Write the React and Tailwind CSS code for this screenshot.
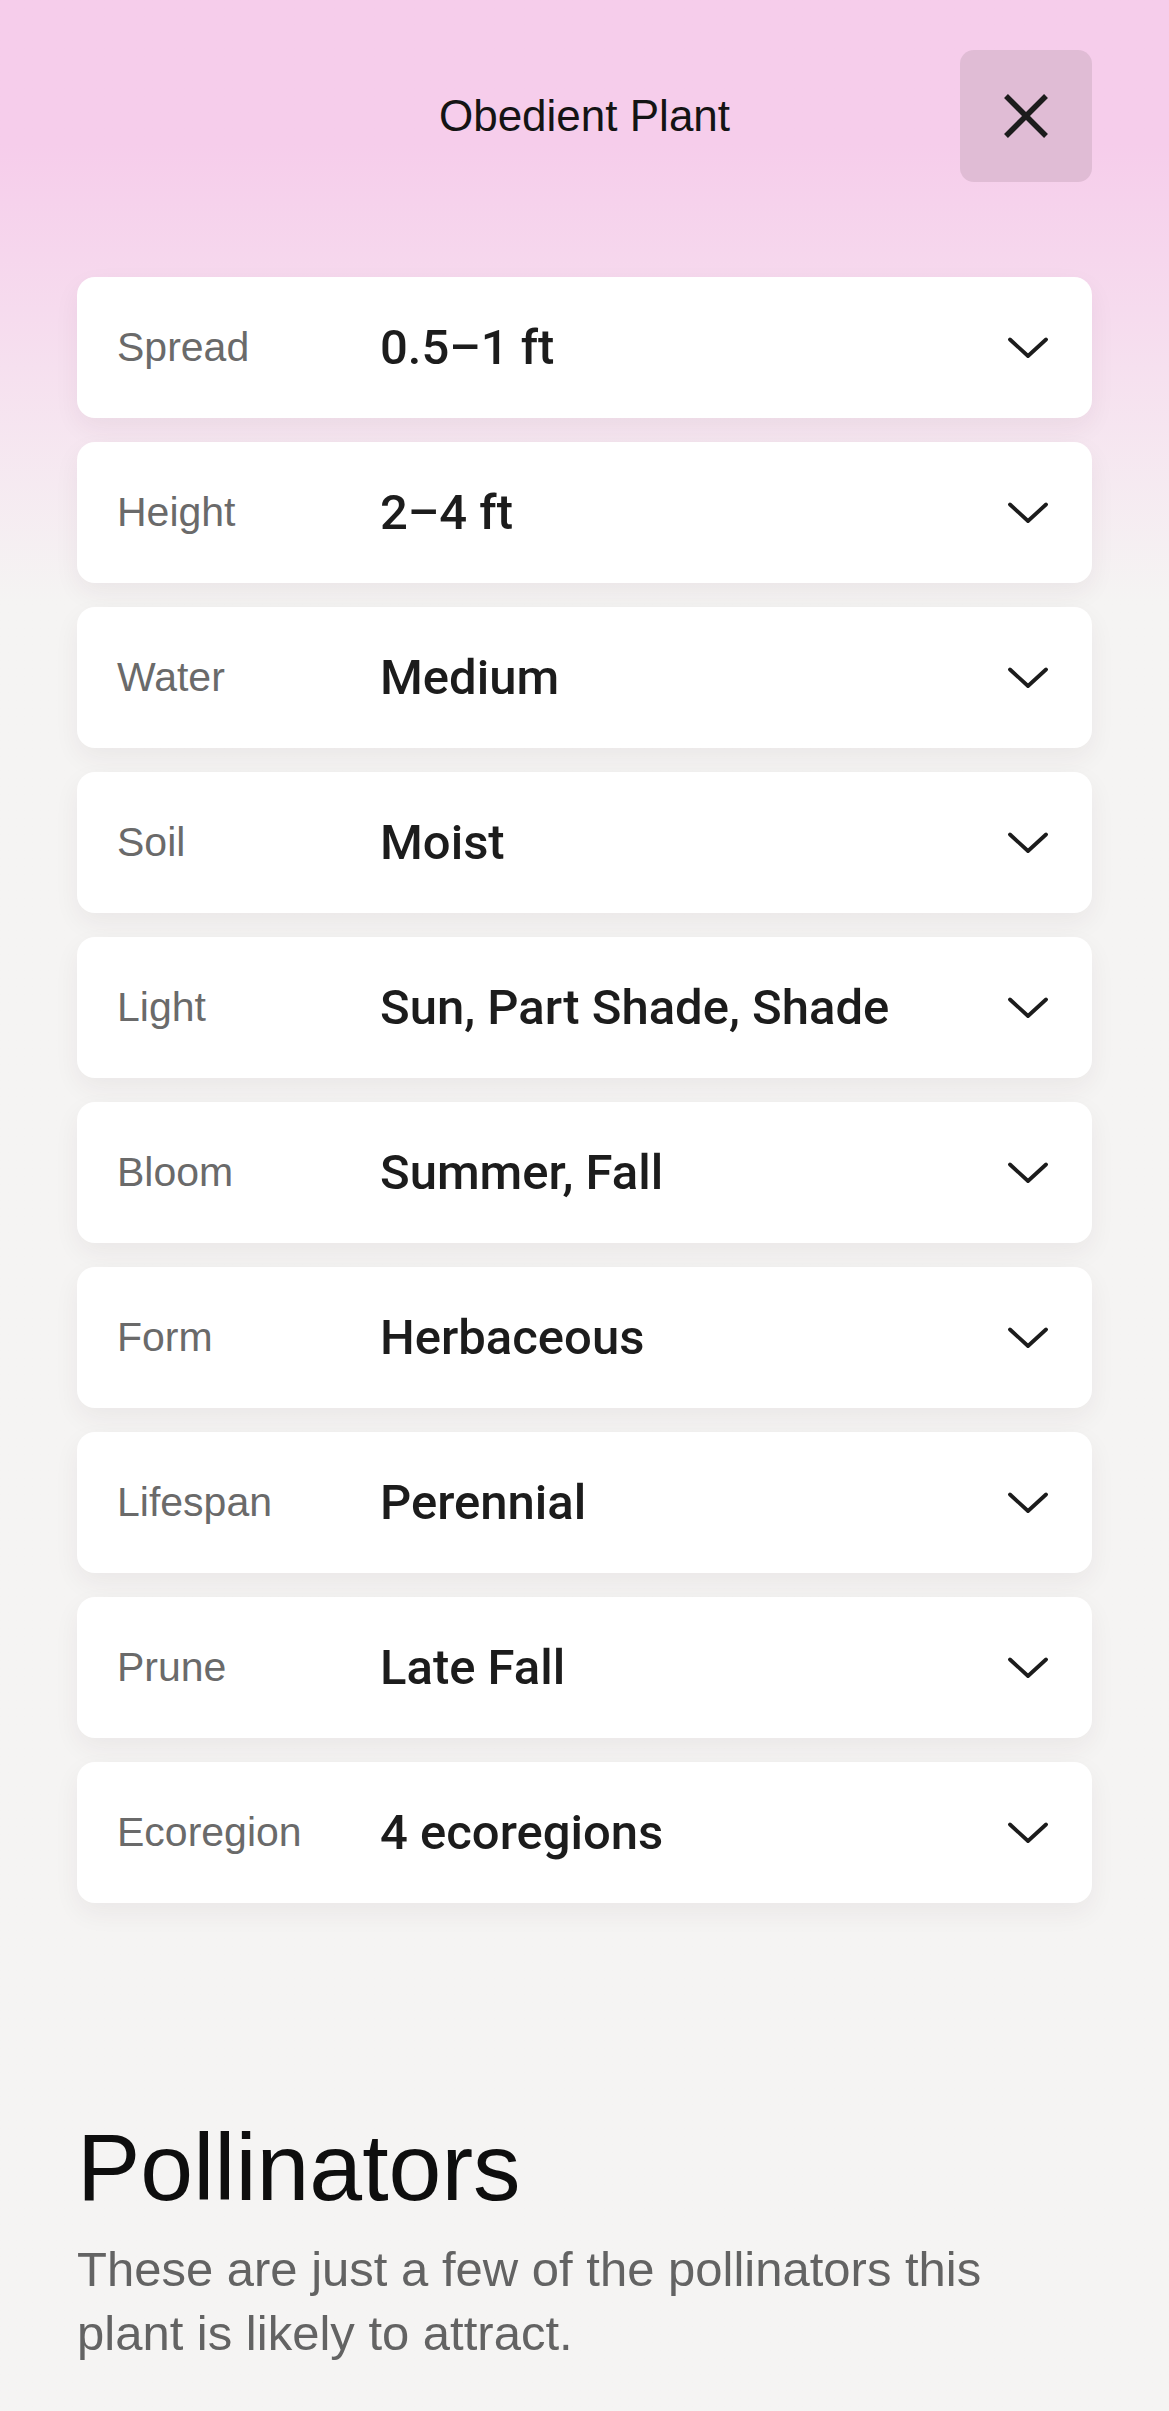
import React from 'react';

const rows = [
    { label: 'Spread', value: '0.5–1 ft' },
    { label: 'Height', value: '2–4 ft' },
    { label: 'Water', value: 'Medium' },
    { label: 'Soil', value: 'Moist' },
    { label: 'Light', value: 'Sun, Part Shade, Shade' },
    { label: 'Bloom', value: 'Summer, Fall' },
    { label: 'Form', value: 'Herbaceous' },
    { label: 'Lifespan', value: 'Perennial' },
    { label: 'Prune', value: 'Late Fall' },
    { label: 'Ecoregion', value: '4 ecoregions' },
];

const Chevron = () => (
    <svg width="40" height="22" viewBox="0 0 40 22" fill="none" className="shrink-0">
        <path d="M2 2.5 L20 19 L38 2.5" stroke="#1c1c1c" strokeWidth="3.8" strokeLinecap="round" strokeLinejoin="round" />
    </svg>
);

const TraitRow = ({ label, value }) => (
    <button className="flex h-[141px] w-full items-center rounded-[18px] bg-white pl-[40px] pr-[44px] text-left shadow-[0_10px_26px_rgba(60,40,50,0.06)]">
        <span className="w-[263px] shrink-0 text-[41px] text-[#6a6a6a]">{label}</span>
        <span className="flex-1 font-['Roboto',Arial,sans-serif] text-[49px] font-medium text-[#1c1c1c]">{value}</span>
        <Chevron />
    </button>
);

export default function App() {
    return (
        <div className="min-h-[2411px] bg-linear-to-b from-[#f6cdeb] from-[6%] to-[#f5f4f3] to-[25%] px-[77px] pt-[50px] font-['Liberation_Sans',Arial,sans-serif]">
            {/* Header */}
            <div className="grid grid-cols-[1fr_auto_1fr] items-center">
                <div />
                <h1 className="text-[44px] text-[#141414]">Obedient Plant</h1>
                <button className="flex h-[132px] w-[132px] items-center justify-center justify-self-end rounded-[14px] bg-[#e0bcd5]">
                    <svg width="46" height="46" viewBox="0 0 46 46" fill="none">
                        <path d="M3 3 L43 43 M43 3 L3 43" stroke="#1c1c1c" strokeWidth="5.5" />
                    </svg>
                </button>
            </div>

            {/* Traits */}
            <div className="mt-[95px] flex flex-col gap-[24px]">
                {rows.map((r) => (
                    <TraitRow key={r.label} label={r.label} value={r.value} />
                ))}
            </div>

            {/* Pollinators */}
            <div className="mt-[212px]">
                <h2 className="text-[95px] leading-[1.1] text-[#0e0e0e]">Pollinators</h2>
                <p className="mt-[17px] max-w-[960px] text-[49px] leading-[64px] text-[#636363]">
                    These are just a few of the pollinators this plant is likely to attract.
                </p>
            </div>
        </div>
    );
}
